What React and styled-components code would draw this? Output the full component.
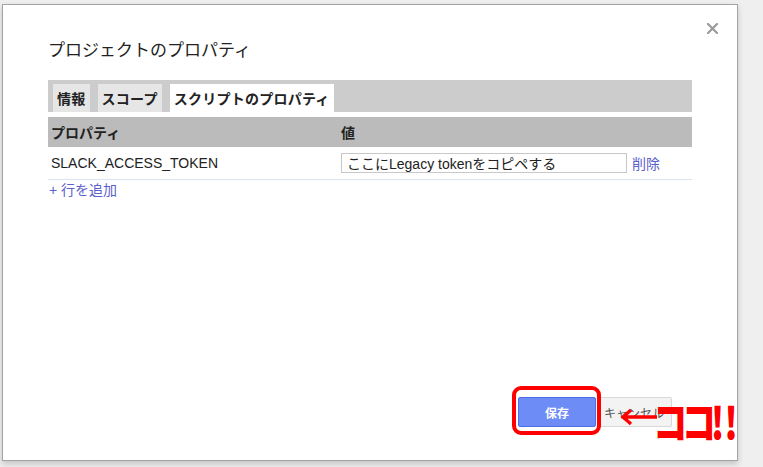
import React from 'react'
import styled, { createGlobalStyle } from 'styled-components'

const GlobalStyle = createGlobalStyle`
  html, body {
    margin: 0;
    padding: 0;
    background: #efefef;
  }
  body {
    font-family: "Liberation Sans", "Noto Sans CJK JP", sans-serif;
    color: #222;
  }
`;

const tabs = [
  { id: 'info', label: '情報' },
  { id: 'scope', label: 'スコープ' },
  { id: 'props', label: 'スクリプトのプロパティ' },
];

function App() {
  return (
    <>
      <GlobalStyle />
      <Page>
        <Dialog>
          <CloseButton aria-label="close">
            <svg width="11" height="11" viewBox="0 0 11 11">
              <path d="M1 1 L10 10 M10 1 L1 10" stroke="#9a9a9a" strokeWidth="2.2" strokeLinecap="square" />
            </svg>
          </CloseButton>

          <Title>プロジェクトのプロパティ</Title>

          <TabBar>
            {tabs.map((t) => (
              <Tab key={t.id} $active={t.id === 'props'}>{t.label}</Tab>
            ))}
          </TabBar>

          <Table>
            <HeadRow>
              <NameCell>プロパティ</NameCell>
              <ValueCell>値</ValueCell>
            </HeadRow>
            <Row>
              <NameCell>SLACK_ACCESS_TOKEN</NameCell>
              <ValueCell>
                <ValueInput defaultValue="ここにLegacy tokenをコピペする" />
                <LinkText>削除</LinkText>
              </ValueCell>
            </Row>
          </Table>
          <AddRow>+ 行を追加</AddRow>

          <Spacer />

          <Footer>
            <SaveButton>保存</SaveButton>
            <CancelButton>キャンセル</CancelButton>
          </Footer>

          {/* annotation drawn over the screenshot */}
          <Highlight />
          <Arrow width="38" height="18" viewBox="0 0 38 18">
            <path d="M37 9 H3 M11 2 L3 9 L11 16" stroke="#ff0000" strokeWidth="3.4" fill="none" />
          </Arrow>
          <Callout>ココ<Bang>!!</Bang></Callout>
        </Dialog>
      </Page>
    </>
  )
}

const Page = styled.div`
  width: 763px;
  height: 467px;
  padding: 4px 0 0 2px;
  box-sizing: border-box;
  background: #efefef;
`;

const Dialog = styled.div`
  position: relative;
  width: 736px;
  height: 457px;
  box-sizing: border-box;
  background: #fff;
  border: 1px solid #a3a3a3;
  box-shadow: 0 3px 6px rgba(0, 0, 0, 0.18);
  padding: 34px 45px 33px 45px;
  display: flex;
  flex-direction: column;
`;

const CloseButton = styled.div`
  position: absolute;
  top: 18px;
  right: 19px;
  width: 11px;
  height: 11px;
  display: flex;
  cursor: pointer;
`;

const Title = styled.div`
  font-family: "Noto Sans CJK JP", sans-serif;
  font-size: 17px;
  line-height: 20px;
  color: #222;
`;

const TabBar = styled.div`
  margin-top: 21px;
  height: 32px;
  box-sizing: border-box;
  background: #cccccc;
  padding: 4px 0 0 5px;
  display: flex;
  gap: 8px;
`;

const Tab = styled.div`
  height: 28px;
  padding: 0 4px;
  display: flex;
  align-items: center;
  background: ${(p) => (p.$active ? '#ffffff' : '#e6e6e6')};
  font-family: "Noto Sans CJK JP", sans-serif;
  font-weight: 700;
  font-size: 14px;
  letter-spacing: 0.25px;
  color: #222;
`;

const Table = styled.div`
  margin-top: 5px;
  display: flex;
  flex-direction: column;
`;

const HeadRow = styled.div`
  display: grid;
  grid-template-columns: 290px 1fr;
  height: 30px;
  align-items: center;
  background: #bbbbbb;
  font-family: "Noto Sans CJK JP", sans-serif;
  font-weight: 700;
  font-size: 14px;
`;

const Row = styled.div`
  display: grid;
  grid-template-columns: 290px 1fr;
  height: 33px;
  box-sizing: border-box;
  align-items: center;
  border-bottom: 1px solid #d9e5f5;
  font-size: 14px;
`;

const NameCell = styled.div`
  padding-left: 3px;
`;

const ValueCell = styled.div`
  display: flex;
  align-items: center;
  padding-left: 3px;
`;

const ValueInput = styled.input`
  width: 286px;
  height: 20px;
  box-sizing: border-box;
  border: 1px solid #c8c8c8;
  padding: 0 5px;
  font-family: "Liberation Sans", "Noto Sans CJK JP", sans-serif;
  font-size: 14px;
  color: #222;
  outline: none;
`;

const LinkText = styled.span`
  margin-left: 5px;
  color: #5b60cc;
  font-family: "Noto Sans CJK JP", sans-serif;
  font-size: 14px;
  cursor: pointer;
`;

const AddRow = styled.div`
  margin-top: 1px;
  padding-left: 1px;
  line-height: 18px;
  font-size: 14px;
  color: #5b60cc;
  cursor: pointer;
`;

const Spacer = styled.div`
  flex: 1;
`;

const Footer = styled.div`
  display: flex;
  justify-content: flex-end;
  padding-right: 20px;
  gap: 3px;
`;

const SaveButton = styled.button`
  width: 78px;
  height: 30px;
  border: 1px solid #4b6fe6;
  border-radius: 2px;
  background: #6d8cf6;
  color: #fff;
  font-family: "Noto Sans CJK JP", sans-serif;
  font-size: 12px;
  font-weight: 700;
  padding: 0;
`;

const CancelButton = styled.button`
  width: 73px;
  height: 30px;
  border: 1px solid #d8d8d8;
  border-radius: 2px;
  background: #f3f3f3;
  color: #555;
  font-family: "Noto Sans CJK JP", sans-serif;
  font-size: 12px;
  padding: 0 0 0 4px;
  text-align: left;
`;

const Highlight = styled.div`
  position: absolute;
  left: 509px;
  top: 381px;
  width: 89px;
  height: 49px;
  box-sizing: border-box;
  border: 4px solid #ff0000;
  border-radius: 9px;
  pointer-events: none;
`;

const Arrow = styled.svg`
  position: absolute;
  left: 617px;
  top: 403px;
`;

const Callout = styled.div`
  position: absolute;
  left: 650px;
  top: 393px;
  font-family: "Noto Sans CJK JP", sans-serif;
  font-weight: 900;
  font-size: 44px;
  line-height: 44px;
  letter-spacing: -7px;
  color: #ff0000;
  white-space: nowrap;
  transform: scale(0.78, 1);
  transform-origin: left top;
`;

const Bang = styled.span`
  letter-spacing: 0;
`;

export default App
